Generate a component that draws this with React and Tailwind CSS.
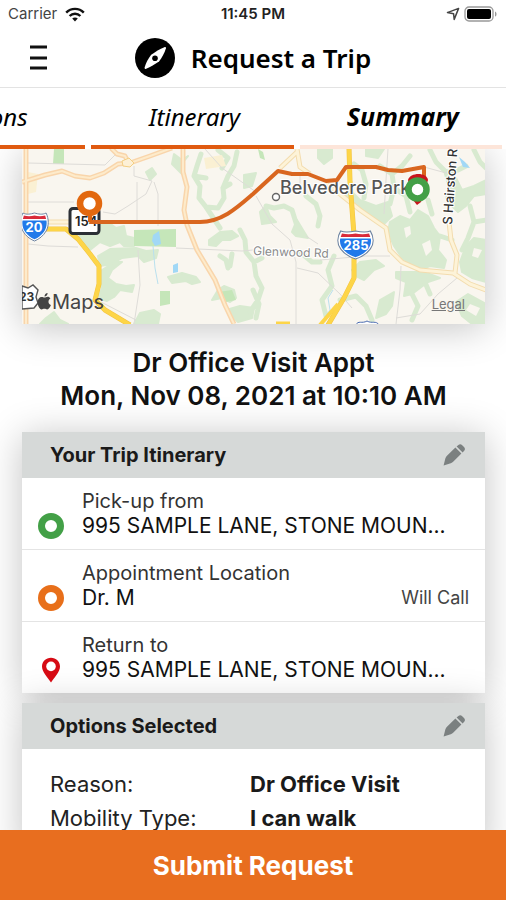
import React, { useState } from 'react';

const tabs = ['Options', 'Itinerary', 'Summary'];

const stops = [
  { id: 'pickup', label: 'Pick-up from', place: '995 SAMPLE LANE, STONE MOUN...', marker: 'green' },
  { id: 'appointment', label: 'Appointment Location', place: 'Dr. M', marker: 'orange', note: 'Will Call' },
  { id: 'return', label: 'Return to', place: '995 SAMPLE LANE, STONE MOUN...', marker: 'pin' },
];

const options = [
  { name: 'Reason:', value: 'Dr Office Visit' },
  { name: 'Mobility Type:', value: 'I can walk' },
];

const StatusBar = () => (
  <div className="grid h-7 shrink-0 grid-cols-3 items-center px-2 text-[15px] leading-5">
    <div className="flex items-center gap-2 text-[#444]">
      <span>Carrier</span>
      <svg width="20" height="15" viewBox="0 0 20 15" fill="none" stroke="#111" strokeWidth="2.4">
        <path d="M1.2 5.6C6 .6 14 .6 18.8 5.6" />
        <path d="M4.6 9C7.6 6 12.4 6 15.4 9" />
        <path d="M10 14.4L7.2 11.6C8.8 10.2 11.2 10.2 12.8 11.6Z" fill="#111" stroke="none" />
      </svg>
    </div>
    <span className="text-center font-semibold text-[#222]">11:45 PM</span>
    <div className="flex items-center justify-end gap-1">
      <svg width="14" height="14" viewBox="0 0 14 14" fill="none" stroke="#444" strokeWidth="1.5" strokeLinejoin="round">
        <path d="M12.6 1.4L1.4 5.6L7.6 6.8L8.2 12.4Z" />
      </svg>
      <svg width="34" height="16" viewBox="0 0 34 16">
        <rect x="1" y="1" width="28" height="14" rx="4" fill="none" stroke="#999" strokeWidth="1.3" />
        <rect x="3" y="3" width="24" height="10" rx="2" fill="#000" />
        <path d="M31 5.4C33 6.2 33 9.8 31 10.6Z" fill="#999" />
      </svg>
    </div>
  </div>
);

const Header = () => (
  <header className="grid h-[60px] shrink-0 grid-cols-[60px_1fr_60px] items-center border-b border-[#e3e3e3]">
    <button aria-label="Menu" className="flex h-10 items-center pl-[30px]">
      <svg width="18" height="26" viewBox="0 0 18 26" stroke="#111" strokeWidth="3">
        <path d="M0 2H17M0 13H17M0 23H17" />
      </svg>
    </button>
    <div className="flex items-center justify-center gap-4">
      <svg width="40" height="40" viewBox="0 0 40 40">
        <circle cx="20" cy="20" r="20" fill="#000" />
        <path
          d="M29.4 9.2C30.6 8.8 31.2 9.6 30.9 10.6C29.4 15.4 27 19.8 24 23.4C19.8 26.2 15.6 28.8 11.2 30.8C10.2 31.2 9.3 30.4 9.6 29.4C11 24.8 13.2 20.6 16.2 16.8C20.2 13.8 24.8 11 29.4 9.2Z"
          fill="#fff"
        />
        <circle cx="20" cy="20.2" r="2.8" fill="#000" />
      </svg>
      <h1 className="font-['Noto_Sans'] text-[26px] leading-8 font-semibold">Request a Trip</h1>
    </div>
  </header>
);

const TabBar = ({ active, onSelect }) => (
  <nav className="relative z-10 flex h-[61px] shrink-0 justify-end gap-[6px] overflow-hidden bg-white pr-1 font-['Noto_Sans'] text-2xl italic">
    {tabs.map((tab) => (
      <button
        key={tab}
        onClick={() => onSelect(tab)}
        className={`w-[40vw] shrink-0 border-b-4 pl-1 ${
          tab === active ? 'border-[#fde5d9] text-[25px] font-bold' : 'border-[#e05a10]'
        }`}
      >
        {tab}
      </button>
    ))}
  </nav>
);

const InterstateShield = ({ x, y, width }) => (
  <svg x={x} y={y} width={width} height="30" viewBox="0 0 30 30" preserveAspectRatio="none">
    <path d="M3 1C7 3 11 2 15 1C19 2 23 3 27 1C30 7 30 14 27 19C24 24 20 27 15 29C10 27 6 24 3 19C0 14 0 7 3 1Z" fill="#fff" stroke="#6d83a0" />
    <path d="M4 3.4C8 4.6 12 4.2 15 3.4C18 4.2 22 4.6 26 3.4L27 7H3Z" fill="#d92b3a" />
    <path d="M2.6 8.6H27.4C28 13 27 17 24.6 20C22 23.4 19 25.6 15 27.2C11 25.6 8 23.4 5.4 20C3 17 2 13 2.6 8.6Z" fill="#2079ea" />
  </svg>
);

const woods = [
  'M76 238L96 226L108 222L116 228L124 226L126 236L134 238L134 246L124 246L120 242L110 246L100 242L90 250Z',
  'M98 256L110 249L136 248L146 251L158 250L156 258L144 262L138 256L122 258L112 264L100 266Z',
  'M99 272L116 261L122 262L112 270L108 278L116 284L126 286L134 285L132 292L120 290L114 297L107 301L98 298L102 288Z',
  'M168 277L182 273L196 277L200 282L192 284L186 281L172 283Z',
  'M140 313L154 310L160 314L158 324H134Z',
  'M46 318L54 312L60 320L68 324H40Z',
  'M218 290L224 286L234 290L236 298L230 302L222 298L212 300Z',
  'M209 240L220 232L232 231L238 236L230 240L222 240L216 246L209 245Z',
  'M244 175L256 173L252 186L244 188Z',
  'M260 212L266 206L270 216L276 222L262 224Z',
  'M292 232L297 220L303 230L308 238L296 236Z',
  'M318 149H332V158L324 164L318 158Z',
  'M343 196L350 190L360 200L376 206L388 202L392 216L384 224L372 216L352 206Z',
  'M390 222L400 216L410 220L418 210L428 216L434 228L440 236L438 250L446 260L444 268L430 266L420 270L402 258L394 246L388 232Z',
  'M396 272L424 272L440 278L428 282L412 294L404 296L406 282L396 278Z',
  'M448 180L456 178L462 190L474 186L486 180V194L474 196L466 206L458 212L450 204Z',
  'M460 262L466 246L474 238L486 240V282L472 278L462 272Z',
  'M468 294L486 304V324H472L462 316L456 302Z',
  'M352 270L360 262L376 260L384 266L374 270L364 280L356 276Z',
  'M380 300L394 292L392 306L386 314L376 318Z',
  'M366 149L384 149L378 158L366 156Z',
  'M188 156L182 160L174 154L172 164L182 174L183 162Z',
  'M226 310L240 306L254 308L252 318L238 322Z',
  'M146 172L152 168L156 174L150 180Z',
];

// Wooded creek lines, drawn as wide strokes
const creeks = [
  'M201 154L197 166L194 176L200 186L199 198L206 207L212 216L220 228M206 207L218 208L224 198L223 188L228 176L234 166L237 152',
  'M194 176L206 178M223 188L230 184M218 150L228 158L222 168',
  'M240 230L245 240L246 252L254 262L256 276L262 288L258 300L250 312M254 262L262 258',
  'M266 206L274 208L284 206L292 210L297 226M306 196L316 204L320 216L318 226',
  'M220 256L226 260L228 268M232 254L230 266',
  'M354 164L362 170L366 184L364 198M380 166L392 174L394 188L390 204',
  'M430 150L436 162L446 172L450 186L448 198M446 172L458 170L466 166M474 150L480 162L486 168',
  'M470 206L474 222L468 238L462 250M474 222L486 220M440 236L452 240',
  'M394 188L406 196L410 212M410 156L402 166L392 174M428 200L432 214',
  'M334 256L328 270L332 286L322 300L326 316M300 252L312 262L320 262',
  'M253 290L259 304L256 318M412 294L418 306L412 320M424 280L430 294M340 300L356 296L366 306L372 320',
];

const roads =
  'M26 149V324M22 182L45 175L62 171L75 176L90 178L104 173L118 164L130 163L150 156L172 148M111 148L117 154L125 156L129 164M183 149V172L187 187L184 210L187 225L197 250L215 280L225 305L234 324';
const lightRoads =
  'M48 222H72M297 149L300 167L310 174M297 152L280 168M326 184L340 194L360 210L386 228L390 250L402 262L420 270L453 273L470 284L486 290M449 222L451 240L457 255L455 273';
const highways =
  'M46 229H66L78 239L90 254L99 266V284L95 300L105 310L130 325M349 148L350 182L354 235L354 278L344 298L328 325';

const TripMap = () => (
  <div className="relative shadow-[0_4px_36px_rgba(0,0,0,0.24)]">
    <svg className="block h-auto w-full" viewBox="22 149 463 175" role="img" aria-label="Trip route map">
      <rect x="22" y="149" width="464" height="176" fill="#f9f6ef" />
      <path d={woods.join('')} fill="#d8ead0" stroke="#d8ead0" strokeWidth="2" strokeLinejoin="round" />
      <path d={creeks.join('')} fill="none" stroke="#d8ead0" strokeWidth="5" strokeLinejoin="round" strokeLinecap="round" />
      <path d="M404 228L410 226L411 234L406 238ZM422 244L430 240L432 250L426 256ZM474 248L482 250L478 258L472 256ZM470 304L480 308L476 316L466 310Z" fill="#f9f6ef" />
      <path
        d="M134 230L176 229V247L134 246ZM160 291L170 291L170 304L160 306ZM54 149H64V164H53ZM258 149L263 152L265 160L260 158ZM218 292L232 290L236 300L226 302Z"
        fill="#c5e6b9"
      />
      <path d="M28 172L38 174L36 192L28 194ZM204 158L222 155L226 166L206 169Z" fill="#faf0d3" />

      <g fill="none" stroke="#dedcd8" strokeWidth="1">
        <path d="M28 163L105 165L118 152M28 202L74 202M134 166L134 176L152 181L146 194L128 206L115 214L103 212M137 182V222M154 182L158 194V226" />
        <path d="M28 244L48 246L78 247M176 248L242 251L253 250M138 250L140 285L134 324M101 302L136 320M205 149L222 168L256 192" />
        <path d="M256 196L272 224L290 240L296 262V324M300 174V190M320 260L365 256L390 256M297 268L318 273L340 294L352 308M401 266L400 290L396 324M396 318L420 314L438 294L457 278M388 149L386 180L384 214M424 167L450 174M306 236L318 244" />
      </g>
      <path d="M153 235L159 231L161 244L155 246L152 241ZM173 265L178 263L178 272L173 273ZM459 157L465 162L470 168L463 167Z" fill="#a1d8f6" />
      <path d="M153 246L155 268L158 284M333 290L328 298L330 310L324 318" fill="none" stroke="#b9e0ee" strokeWidth="1" />

      {/* casing first, then the core on top */}
      <g fill="none" strokeLinejoin="round">
        <path d={roads} stroke="#f9d5ab" strokeWidth="5" />
        <path d={roads} stroke="#fdebcb" strokeWidth="2" />
        <path d={lightRoads} stroke="#f3dcae" strokeWidth="5" />
        <path d={lightRoads} stroke="#fdf3d8" strokeWidth="3" />
        <path d="M122 161L129 158L134 163L130 167L123 166Z" fill="#fdf0d6" stroke="#f3cf83" />
        <path d="M276 323H290" stroke="#fdd548" strokeWidth="3" />
        <path d={highways} stroke="#f3c342" strokeWidth="5" />
        <path d={highways} stroke="#fdd548" strokeWidth="4" />
        <path d="M338 304L320 325" stroke="#fdd548" strokeWidth="4" />
      </g>

      <InterstateShield x="20" y="212" width="29" />
      <text x="34" y="232" fontSize="13" fontWeight="700" fill="#fff" textAnchor="middle">20</text>
      <InterstateShield x="337" y="230" width="37" />
      <text x="356" y="250" fontSize="13" fontWeight="700" fill="#fff" textAnchor="middle">285</text>
      <path d="M356 325C358 320 362 324 367 321C372 324 376 320 379 325Z" fill="#fff" stroke="#4769b0" />

      <path d="M22 286L28 288L33 285L38 290L36 297L38 303L34 308L22 309Z" fill="#fff" stroke="#555" strokeWidth="1.4" />
      <text x="19" y="301" fontSize="12" fontWeight="700" fill="#333">23</text>

      <rect x="70" y="208.5" width="29" height="25" rx="3" fill="#fff" stroke="#2b2f35" strokeWidth="3" />
      <text x="75" y="226" fontSize="13" fontWeight="600" fill="#222">154</text>

      <g fill="#555" stroke="#fff" strokeWidth="2" paintOrder="stroke">
        <text x="280" y="194" fontSize="18" fontWeight="500">Belvedere Park</text>
        <text x="253" y="255" fontSize="12" fill="#8a8a8a" transform="rotate(2 253 255)">Glenwood Rd</text>
        <text x="452" y="225" fontSize="13" fontWeight="500" fill="#333" transform="rotate(-86 452 225)">S Hairston R</text>
      </g>
      <circle cx="276" cy="197" r="3.5" fill="#fff" stroke="#666" strokeWidth="1.4" />

      <path
        d="M90 222H200C222 222 238 207 253 194L278 171L292 174H308L326 181L337 180L346 167H376L388 170L402 171L424 167V178"
        fill="none"
        stroke="#d9661f"
        strokeWidth="4"
        strokeLinejoin="round"
      />
      <path d="M88 214H92V222H88Z" fill="#e06614" />
      <circle cx="89.5" cy="203.5" r="9.5" fill="#fff" stroke="#e2680f" strokeWidth="6.5" />
      <path d="M408 180C410 172 427 172 428 180L421 202L417 205L413 200Z" fill="#c8161d" />
      <circle cx="417.5" cy="189.5" r="9" fill="#fff" stroke="#43a047" strokeWidth="6.5" />

      <g fill="#444">
        <path d="M44.5 296.5C44.4 294.6 46 293 47.6 293C47.8 294.9 46.2 296.5 44.5 296.5ZM44.4 297.6C45.6 297.6 46.2 296.8 47.6 296.8C48.9 296.8 49.8 297.4 50.4 298.4C47.6 300 48 303.8 50.9 305C50 307.4 48.7 309.4 47.2 309.4C46.1 309.4 45.7 308.7 44.4 308.7C43.1 308.7 42.6 309.4 41.6 309.4C39.6 309.4 37.6 305.4 37.6 302.2C37.6 299 39.5 297 41.6 297C42.8 297 43.6 297.6 44.4 297.6Z" />
        <text x="52" y="309" fontSize="20">Maps</text>
      </g>
    </svg>
    <a href="#legal" className="absolute right-5 bottom-3 text-[13px] leading-4 text-[#777] underline">Legal</a>
  </div>
);

const StopMarker = ({ marker }) => {
  if (marker === 'pin') {
    return (
      <svg className="shrink-0" width="26" height="26" viewBox="0 0 26 26">
        <path d="M13 .8C18 .8 22 4.6 22 9.6C22 14.6 16.6 20.4 13 25.6C9.4 20.4 4 14.6 4 9.6C4 4.6 8 .8 13 .8Z" fill="#d60b14" />
        <circle cx="13" cy="9.4" r="4.8" fill="#fff" />
      </svg>
    );
  }
  return (
    <span
      className={`size-[26px] shrink-0 rounded-full border-[7px] ${
        marker === 'green' ? 'border-[#43a047]' : 'border-[#e86f1a]'
      }`}
    />
  );
};

const Card = ({ title, children }) => (
  <section className="bg-white shadow-[0_4px_36px_rgba(0,0,0,0.24)]">
    <div className="flex h-[46px] items-center justify-between bg-[#d6d9d8] pr-5 pl-7">
      <h3 className="text-xl leading-6 font-bold text-[#1a1a1a]">{title}</h3>
      <button aria-label={`Edit ${title}`}>
        <svg width="22" height="22" viewBox="0 0 22 22" fill="#7b8080">
          <path d="M.6 21.6L2.4 14.2C2.8 13 3.4 12.2 4.2 11.4L12.4 3.6L18.4 9.4L10.4 17.4C9.6 18.2 8.8 18.8 7.8 19.2Z" />
          <path d="M13.6 2.4L15.4 1C16.6 0 18 0 19.2 1.2L21 3C22.2 4.2 22.2 5.6 21.2 6.8L19.6 8.4Z" />
        </svg>
      </button>
    </div>
    {children}
  </section>
);

export default function App() {
  const [activeTab, setActiveTab] = useState('Summary');

  return (
    <div className="flex h-screen flex-col overflow-hidden bg-white font-['Inter',sans-serif] text-black">
      <StatusBar />
      <Header />
      <TabBar active={activeTab} onSelect={setActiveTab} />

      <main className="flex-1 overflow-y-auto pr-[21px] pl-[22px] [scrollbar-width:none]">
        <TripMap />

        <h2 className="pt-[22px] pb-5 text-center text-[26px] leading-[33px] font-semibold text-[#111]">
          Dr Office Visit Appt
          <br />
          Mon, Nov 08, 2021 at 10:10 AM
        </h2>

        <div className="space-y-[10px]">
          <Card title="Your Trip Itinerary">
            <ul className="divide-y divide-[#e4e4e4]">
              {stops.map((stop) => (
                <li key={stop.id} className="flex items-end gap-[18px] px-4 pt-[11px] pb-[10px]">
                  <StopMarker marker={stop.marker} />
                  <div className="min-w-0 flex-1 whitespace-nowrap">
                    <p className="text-xl leading-6 text-[#333]">{stop.label}</p>
                    <p className="text-[21px] leading-[26px] text-[#111]">{stop.place}</p>
                  </div>
                  {stop.note && <span className="text-lg leading-[26px] text-[#444]">{stop.note}</span>}
                </li>
              ))}
            </ul>
          </Card>

          <Card title="Options Selected">
            <dl className="grid grid-cols-[200px_1fr] px-7 py-[18px] text-[22px] leading-[34px]">
              {options.map((option) => (
                <React.Fragment key={option.name}>
                  <dt className="text-[#222]">{option.name}</dt>
                  <dd className="font-bold text-[#1a1a1a]">{option.value}</dd>
                </React.Fragment>
              ))}
            </dl>
          </Card>
        </div>
      </main>

      <button className="relative h-[70px] shrink-0 bg-[#e86e1f] text-[26px] font-bold text-white">
        Submit Request
      </button>
    </div>
  );
}
